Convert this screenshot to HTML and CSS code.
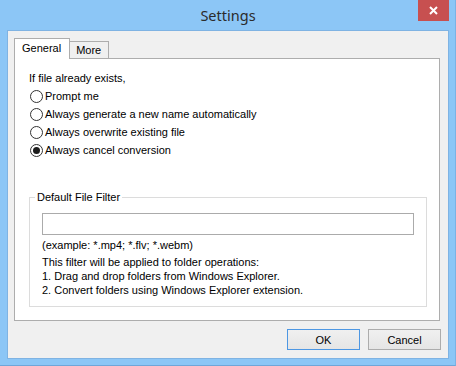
FILE: index.html
```html
<!DOCTYPE html>
<html lang="en">
<head>
  <meta charset="UTF-8">
  <meta name="viewport" content="width=device-width, initial-scale=1.0">
  <title>Settings</title>
  <link rel="stylesheet" href="styles.css">
</head>
<body>
  <div class="window">
    <div class="titlebar">
      <div class="title">Settings</div>
      <button class="close-button" aria-label="Close">
        <svg width="9" height="9" viewBox="0 0 9 9">
          <path d="M1 1 L8 8 M8 1 L1 8" stroke="#fff" stroke-width="2" fill="none"/>
        </svg>
      </button>
    </div>

    <div class="client">
      <div class="tabs">
        <div class="tab tab-active">General</div>
        <div class="tab">More</div>
      </div>

      <div class="tab-panel">
        <div class="option-title">If file already exists,</div>
        <div class="radio-list">
          <label class="radio-row"><span class="radio"></span>Prompt me</label>
          <label class="radio-row"><span class="radio"></span>Always generate a new name automatically</label>
          <label class="radio-row"><span class="radio"></span>Always overwrite existing file</label>
          <label class="radio-row"><span class="radio radio-checked"></span>Always cancel conversion</label>
        </div>

        <fieldset class="group-box">
          <legend>Default File Filter</legend>
          <div class="group-body">
            <input class="text-input" type="text">
            <div class="hint">(example: *.mp4; *.flv; *.webm)</div>
            <div class="note">
              This filter will be applied to folder operations:<br>
              1. Drag and drop folders from Windows Explorer.<br>
              2. Convert folders using Windows Explorer extension.
            </div>
          </div>
        </fieldset>
      </div>

      <div class="button-row">
        <button class="button button-default">OK</button>
        <button class="button">Cancel</button>
      </div>
    </div>
  </div>
</body>
</html>
```

FILE: styles.css
```css
html, body {
  margin: 0;
  padding: 0;
  overflow: hidden;
}

body {
  font-family: 'Liberation Sans', Arial, sans-serif;
  font-size: 11px;
  color: #000;
}

.window {
  width: 456px;
  height: 366px;
  box-sizing: border-box;
  background-color: #8cc6f6;
  border-bottom: 1px solid #6fa6d9;
  border-right: 1px solid #7bb2e4;
}

.titlebar {
  display: flex;
  align-items: flex-start;
  height: 31px;
}

.title {
  flex: 1;
  text-align: center;
  padding-left: 38px;
  line-height: 30px;
  font-family: 'Noto Sans', 'Open Sans', sans-serif;
  font-size: 14.5px;
  color: #2b2b2b;
}

.close-button {
  width: 31px;
  height: 21px;
  margin-right: 6px;
  padding: 0;
  border: none;
  background-color: #c75050;
  display: flex;
  align-items: center;
  justify-content: center;
}

.client {
  margin: 0 7px 0 8px;
  height: 327px;
  box-sizing: border-box;
  padding: 7px 8px 0 6px;
  background-color: #f0f0f0;
  box-shadow: 0 0 0 1px #7fb3e3;
}

.tabs {
  display: flex;
  align-items: flex-end;
  height: 20px;
  position: relative;
  z-index: 1;
}

.tab {
  box-sizing: border-box;
  height: 17px;
  line-height: 16px;
  padding: 0 7px 0 6px;
  border: 1px solid #adadad;
  border-bottom: none;
  background-color: #f0f0f0;
  margin-left: -1px;
}

.tab-active {
  height: 21px;
  margin-bottom: -1px;
  margin-left: 0;
  line-height: 19px;
  padding: 0 8px 0 7px;
  background-color: #fff;
  position: relative;
  z-index: 1;
}

.tab-panel {
  box-sizing: border-box;
  height: 263px;
  padding: 10px 12px 0 14px;
  background-color: #fff;
  border: 1px solid #adadad;
}

.option-title,
.radio-row {
  line-height: 18px;
  height: 18px;
}

.radio-row {
  display: flex;
  align-items: center;
}

.radio {
  box-sizing: border-box;
  width: 13px;
  height: 13px;
  margin: 0 2px 0 1px;
  border: 1px solid #333;
  border-radius: 50%;
  background-color: #fff;
  display: flex;
  align-items: center;
  justify-content: center;
}

.radio-checked::after {
  content: '';
  width: 7px;
  height: 7px;
  border-radius: 50%;
  background-color: #1c1c1c;
}

.group-box {
  margin: 31px 0 0 0;
  padding: 9px 0 9px 0;
  border: 1px solid #dcdcdc;
}

.group-box legend {
  margin-left: 5px;
  padding: 0 2px;
  line-height: 14px;
}

.group-body {
  padding: 0 12px;
}

.text-input {
  display: block;
  box-sizing: border-box;
  width: 100%;
  height: 22px;
  margin: 0;
  border: 1px solid #ababab;
  background-color: #fff;
}

.hint {
  margin-top: 3px;
  line-height: 14px;
}

.note {
  margin-top: 3px;
  line-height: 14px;
}

.button-row {
  display: flex;
  justify-content: flex-end;
  gap: 8px;
  margin-top: 8px;
  margin-right: -1px;
}

.button {
  box-sizing: border-box;
  width: 73px;
  height: 21px;
  padding: 0;
  font-family: 'Liberation Sans', Arial, sans-serif;
  font-size: 11px;
  color: #000;
  border: 1px solid #acacac;
  background: linear-gradient(#f0f0f0, #e5e5e5);
}

.button-default {
  border-color: #4d97e3;
}
```
